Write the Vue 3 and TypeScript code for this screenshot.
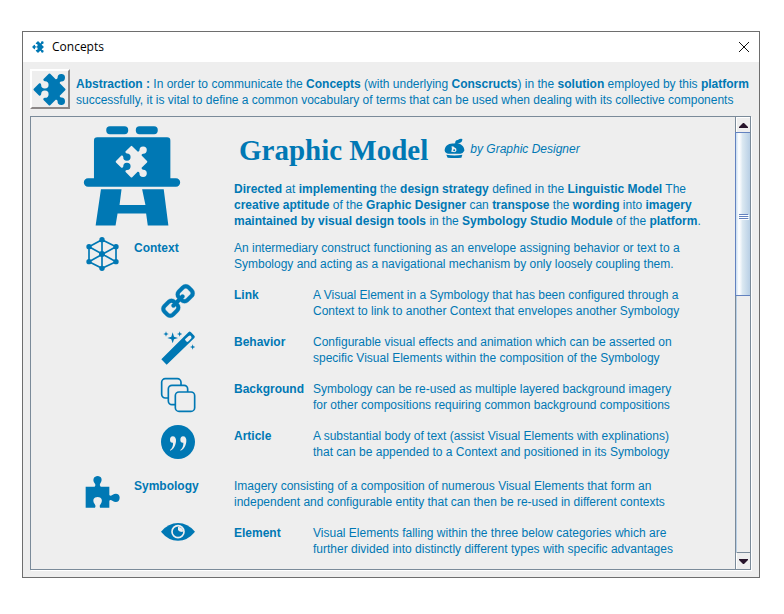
<script setup lang="ts">
interface Segment {
  text: string
  bold?: boolean
}

interface Concept {
  id: string
  label: string
  level: 1 | 2
  lines: string[]
}

// Splits "plain *bold* plain" into styled segments.
function segments(source: string): Segment[] {
  return source
    .split('*')
    .map((text, index) => ({ text, bold: index % 2 === 1 }))
    .filter((segment) => segment.text.length > 0)
}

const abstraction = [
  '*Abstraction :* In order to communicate the *Concepts* (with underlying *Conscructs*) in the *solution* employed by this *platform*',
  'successfully, it is vital to define a common vocabulary of terms that can be used when dealing with its collective components',
].map(segments)

const introduction = [
  '*Directed* at *implementing* the *design strategy* defined in the *Linguistic Model* The',
  '*creative aptitude* of the *Graphic Designer* can *transpose* the *wording* into *imagery*',
  '*maintained by visual design tools* in the *Symbology Studio Module* of the *platform*.',
].map(segments)

const concepts: Concept[] = [
  {
    id: 'context',
    label: 'Context',
    level: 1,
    lines: [
      'An intermediary construct functioning as an envelope assigning behavior or text to a',
      'Symbology and acting as a navigational mechanism by only loosely coupling them.',
    ],
  },
  {
    id: 'link',
    label: 'Link',
    level: 2,
    lines: [
      'A Visual Element in a Symbology that has been configured through a',
      'Context to link to another Context that envelopes another Symbology',
    ],
  },
  {
    id: 'behavior',
    label: 'Behavior',
    level: 2,
    lines: [
      'Configurable visual effects and animation which can be asserted on',
      'specific Visual Elements within the composition of the Symbology',
    ],
  },
  {
    id: 'background',
    label: 'Background',
    level: 2,
    lines: [
      'Symbology can be re-used as multiple layered background imagery',
      'for other compositions requiring common background compositions',
    ],
  },
  {
    id: 'article',
    label: 'Article',
    level: 2,
    lines: [
      'A substantial body of text (assist Visual Elements with explinations)',
      'that can be appended to a Context and positioned in its Symbology',
    ],
  },
  {
    id: 'symbology',
    label: 'Symbology',
    level: 1,
    lines: [
      'Imagery consisting of a composition of numerous Visual Elements that form an',
      'independent and configurable entity that can then be re-used in different contexts',
    ],
  },
  {
    id: 'element',
    label: 'Element',
    level: 2,
    lines: [
      'Visual Elements falling within the three below categories which are',
      'further divided into distinctly different types with specific advantages',
    ],
  },
]

const puzzle =
  'M3 0H26Q30-3 27-7A11 11 0 1 1 42-7Q39-3 43 0H66Q69 0 69 3V26Q72 30 76 27A11 11 0 1 1 76 42Q72 39 69 43V66Q69 69 66 69H43Q39 66 42 62A11 11 0 1 0 27 62Q30 66 26 69H3Q0 69 0 66V43Q3 39 7 42A11 11 0 1 0 7 27Q3 30 0 26V3Q0 0 3 0Z'
const tilt = 'translate(49 49) rotate(45) translate(-34.5 -34.5)'
</script>

<template>
  <main class="window">
    <header class="titlebar">
      <svg class="titlebar-icon" viewBox="0 0 98 98" aria-hidden="true">
        <path :d="puzzle" :transform="tilt" />
      </svg>
      <span class="titlebar-text">Concepts</span>
      <button class="close" type="button" aria-label="Close">
        <svg viewBox="0 0 12 12" aria-hidden="true"><path d="M1 1L11 11M11 1L1 11" /></svg>
      </button>
    </header>

    <div class="body">
      <section class="abstraction">
        <button class="emblem" type="button" aria-label="Concepts">
          <svg viewBox="0 0 98 98" aria-hidden="true">
            <path :d="puzzle" :transform="tilt" />
          </svg>
        </button>
        <p class="copy">
          <span v-for="(line, i) in abstraction" :key="i" class="line"
            ><template v-for="(s, j) in line" :key="j"
              ><b v-if="s.bold">{{ s.text }}</b
              ><template v-else>{{ s.text }}</template></template
            ></span
          >
        </p>
      </section>

      <section class="pane">
        <div class="content">
          <div class="intro">
            <svg class="easel" viewBox="27 24 289 300" aria-hidden="true">
              <rect x="94" y="24" width="66" height="24" rx="11" />
              <rect x="183" y="24" width="66" height="24" rx="11" />
              <path d="M57 67Q57 57 67 57H277Q287 57 287 67V181H304A12 12 0 0 1 304 206H39A12 12 0 0 1 39 181H57Z" />
              <path d="M78 214H140L134 261H212L202 214H267L281 323H219L214 287H128L122 323H62Z" />
              <g transform="translate(121 82)">
                <path class="cutout" :d="puzzle" :transform="tilt" />
              </g>
            </svg>
            <div class="intro-text">
              <div class="heading">
                <h1>Graphic Model</h1>
                <svg class="beret" viewBox="40 38 64 62" aria-hidden="true">
                  <path d="M42 76C42 61 54 52 70 54C86 49 103 60 102 76Q98 84 90 85H54Q44 84 42 76Z" />
                  <path d="M74 54Q73 44 82 43Q90 37 96 40Q96 50 87 52Q81 54 78 58Z" />
                  <path d="M47 88Q72 93 96 88L93 97Q72 99 51 97Z" />
                  <path class="cutout" d="M63 62Q70 62 72 66Q79 68 78 75Q76 81 69 80L62 79Q66 73 63 62Z" />
                  <circle cx="71" cy="74" r="3" />
                </svg>
                <em>by Graphic Designer</em>
              </div>
              <p class="copy">
                <span v-for="(line, i) in introduction" :key="i" class="line"
                  ><template v-for="(s, j) in line" :key="j"
                    ><b v-if="s.bold">{{ s.text }}</b
                    ><template v-else>{{ s.text }}</template></template
                  ></span
                >
              </p>
            </div>
          </div>

          <article
            v-for="concept in concepts"
            :key="concept.id"
            class="concept"
            :class="'level-' + concept.level"
          >
            <svg v-if="concept.id === 'context'" class="icon" viewBox="29 27 102 102" aria-hidden="true">
              <path class="stroke" d="M80 35L122 56V101L80 121L41 101V56ZM80 35V121M41 56L122 101M122 56L41 101" />
              <circle cx="80" cy="35" r="8" /><circle cx="122" cy="56" r="8" />
              <circle cx="122" cy="101" r="8" /><circle cx="80" cy="121" r="8" />
              <circle cx="41" cy="101" r="8" /><circle cx="41" cy="56" r="8" />
              <circle cx="80" cy="78" r="9" />
            </svg>
            <svg v-else-if="concept.id === 'link'" class="icon" viewBox="0 0 1664 1664" aria-hidden="true">
              <g class="chain" transform="matrix(-1 0 0 1 1664 0)">
                <path d="M1456 1216q0-40-28-68l-208-208q-28-28-68-28-42 0-72 32 3 3 19 18.500t21.500 21.500 15 19 13 25.500 3.500 27.500q0 40-28 68t-68 28q-15 0-27.500-3.500t-25.500-13-19-15-21.500-21.500-18.500-19q-33 31-33 73 0 40 28 68l206 207q27 27 68 27 40 0 68-26l147-146q28-28 28-67zm-703-705q0-40-28-68l-206-207q-28-28-68-28-39 0-68 27l-147 146q-28 28-28 67 0 40 28 68l208 208q27 27 68 27 42 0 72-31-3-3-19-18.500t-21.500-21.500-15-19-13-25.500-3.500-27.500q0-40 28-68t68-28q15 0 27.500 3.500t25.500 13 19 15 21.500 21.500 18.500 19q33-31 33-73zm895 705q0 120-85 203l-147 146q-83 83-203 83-121 0-204-85l-206-207q-83-83-83-203 0-123 88-209l-88-88q-86 88-208 88-120 0-204-84l-208-208q-84-84-84-204t85-203l147-146q83-83 203-83 121 0 204 85l206 207q83 83 83 203 0 123-88 209l88 88q86-88 208-88 120 0 204 84l208 208q84 84 84 204z" />
              </g>
            </svg>
            <svg v-else-if="concept.id === 'behavior'" class="icon" viewBox="33 33 102 102" aria-hidden="true">
              <path fill-rule="evenodd" d="M34 118L116 36Q119 33 123 37L133 47Q136 50 133 54L50 134ZM106 61L111 66Q115 66 124 55Q126 51 122 47Q119 45 116 48L105 58Z" />
              <path d="M68 37L72 50L84 54L72 58L68 70L64 58L52 54L64 50ZM48 34L50 40L56 42L50 44L48 50L46 44L40 42L46 40ZM89 34L91 40L97 42L91 44L89 50L87 44L81 42L87 40ZM128 73L130 79L136 81L130 83L128 89L126 83L120 81L126 79Z" />
            </svg>
            <svg v-else-if="concept.id === 'background'" class="icon" viewBox="33 174 102 102" aria-hidden="true">
              <rect class="sheet" x="35" y="176" width="58" height="58" rx="11" />
              <rect class="sheet" x="55" y="196" width="58" height="58" rx="11" />
              <rect class="sheet" x="76" y="216" width="58" height="58" rx="11" />
            </svg>
            <svg v-else-if="concept.id === 'article'" class="icon" viewBox="258 29 102 102" aria-hidden="true">
              <circle cx="309" cy="80" r="51" />
              <path class="cutout" d="M293 63C300 63 304 69 303 78C302 91 296 102 286 106L285 104C291 99 295 92 294 82C288 83 285 79 285 73C285 67 288 63 293 63ZM324 63C331 63 335 69 334 78C333 91 327 102 317 106L316 104C322 99 326 92 325 82C319 83 316 79 316 73C316 67 319 63 324 63Z" />
            </svg>
            <svg v-else-if="concept.id === 'symbology'" class="icon" viewBox="31 177 102 102" aria-hidden="true">
              <path d="M33 212H60Q65 208 60 202C52 191 58 180 69 180C80 180 85 191 77 202Q73 208 78 212H104V237Q107 241 113 237C124 229 135 234 135 245C135 257 124 262 113 254Q107 250 104 254V275H76Q73 269 78 264C86 253 80 243 69 243C57 243 52 253 60 264Q65 270 61 275H33Z" />
            </svg>
            <svg v-else class="icon" viewBox="33 33 102 102" aria-hidden="true">
              <path d="M33 62Q55 36 84 36T135 62Q113 89 84 89T33 62Z" />
              <circle class="iris" cx="84" cy="62" r="18" />
              <path class="cutout" d="M84 47L84 55Q85 63 98 63L99 58Q97 49 84 47Z" />
            </svg>
            <h2>{{ concept.label }}</h2>
            <p class="copy">
              <span v-for="line in concept.lines" :key="line" class="line">{{ line }}</span>
            </p>
          </article>
        </div>

        <div class="scrollbar">
          <button class="step" type="button" aria-label="Scroll up">
            <svg viewBox="0 0 9 5" aria-hidden="true"><path d="M4 0H5L9 4V5H0V4Z" /></svg>
          </button>
          <div class="track">
            <div class="thumb"><i></i><i></i><i></i></div>
          </div>
          <button class="step step-down" type="button" aria-label="Scroll down">
            <svg viewBox="0 0 9 5" aria-hidden="true"><path d="M0 0H9V1L5 5H4L0 1Z" /></svg>
          </button>
        </div>
      </section>
    </div>
  </main>
</template>

<style>
body {
  background: #fff;
}
</style>

<style scoped>
* {
  box-sizing: border-box;
}

.window {
  margin: 31px 24px 36px 22px;
  border: 1px solid #6e6e6e;
  background: #eee;
  color: #0078b4;
  font: 12px/16px 'Liberation Sans', Arial, sans-serif;
}

svg {
  display: block;
  flex: none;
  fill: #0078b4;
  overflow: visible;
}

h1,
h2,
p {
  margin: 0;
}

button {
  display: flex;
  align-items: center;
  justify-content: center;
  padding: 0;
  border: 0;
  background: none;
}

.line {
  display: block;
  white-space: nowrap;
}

.cutout {
  fill: #eee;
}

.titlebar {
  display: flex;
  align-items: center;
  gap: 8px;
  height: 30px;
  padding: 0 9px;
  background: #fff;
  color: #000;
  font-family: 'Open Sans', 'Noto Sans', sans-serif;
}

.titlebar-icon {
  width: 12px;
  height: 12px;
}

.titlebar-text {
  flex: 1;
}

.close svg {
  width: 12px;
  height: 12px;
  fill: none;
  stroke: #111;
}

.body {
  padding: 7px 8px 7px 7px;
}

.abstraction {
  display: flex;
  gap: 6px;
  margin-bottom: 7px;
}

.emblem {
  flex: none;
  justify-content: flex-start;
  width: 40px;
  height: 40px;
  padding-left: 1px;
  border: 2px solid;
  border-color: #fff #8c8888 #8c8888 #fff;
}

.emblem svg {
  width: 33px;
  height: 33px;
}

.abstraction .copy {
  padding-top: 7px;
}

.pane {
  display: flex;
  border: 1px solid #7a8a99;
  box-shadow: 1px 1px #fff;
}

.content {
  flex: 1;
  min-width: 0;
  padding: 9px 0 0 53px;
}

.intro {
  display: flex;
  gap: 54px;
  margin-bottom: 10px;
}

.easel {
  width: 96px;
  height: 100px;
}

.intro-text {
  height: 101px;
}

.heading {
  display: flex;
  align-items: center;
  height: 48px;
  padding-left: 5px;
  margin-bottom: 7px;
}

h1 {
  font: bold 29px/48px 'Liberation Serif', 'Times New Roman', serif;
}

.beret {
  width: 21px;
  height: 21px;
  margin: 0 5px 4px 16px;
}

.heading em {
  padding-bottom: 2px;
}

.concept {
  display: grid;
  align-items: start;
  min-height: 47px;
}

.level-1 {
  grid-template-columns: 49px 100px 1fr;
  padding-left: 1px;
}

.level-2 {
  grid-template-columns: 73px 79px 1fr;
  padding-left: 77px;
}

.level-2 + .level-1 {
  margin-top: 3px;
}

.icon {
  width: 34px;
  height: 34px;
}

h2 {
  padding-top: 3px;
  font: inherit;
  font-weight: bold;
}

.concept .copy {
  padding-top: 3px;
}

.stroke {
  fill: none;
  stroke: #0078b4;
  stroke-width: 5;
}

.chain {
  stroke: #0078b4;
  stroke-width: 15;
}

.sheet {
  fill: #eee;
  stroke: #0078b4;
  stroke-width: 5;
}

.iris {
  stroke: #eee;
  stroke-width: 5;
}

.scrollbar {
  display: flex;
  flex: none;
  flex-direction: column;
  width: 15px;
  border-left: 1px solid #7a8a99;
}

.step {
  height: 15px;
  border: 1px solid #fff;
  border-width: 1px 0 0 1px;
}

.step svg {
  width: 9px;
  height: 5px;
  fill: #28142b;
}

.step-down {
  height: 17px;
  border-top: 1px solid #7a8a99;
}

.track {
  flex: 1;
  border-left: 1px solid #b8cfe5;
}

.thumb {
  display: flex;
  flex-direction: column;
  align-items: center;
  justify-content: center;
  gap: 1px;
  height: 39%;
  padding-top: 5px;
  margin-left: -2px;
  border: 1px solid #6382bf;
  border-right: 0;
  background: linear-gradient(90deg, #c8ddf2 0, #fff 20%, #f0f5fa 35%, #dce9f2 45%, #b8cfe5 100%);
}

.thumb i {
  width: 9px;
  height: 1px;
  background: #6382bf;
  box-shadow: 1px 1px #fff;
}
</style>
